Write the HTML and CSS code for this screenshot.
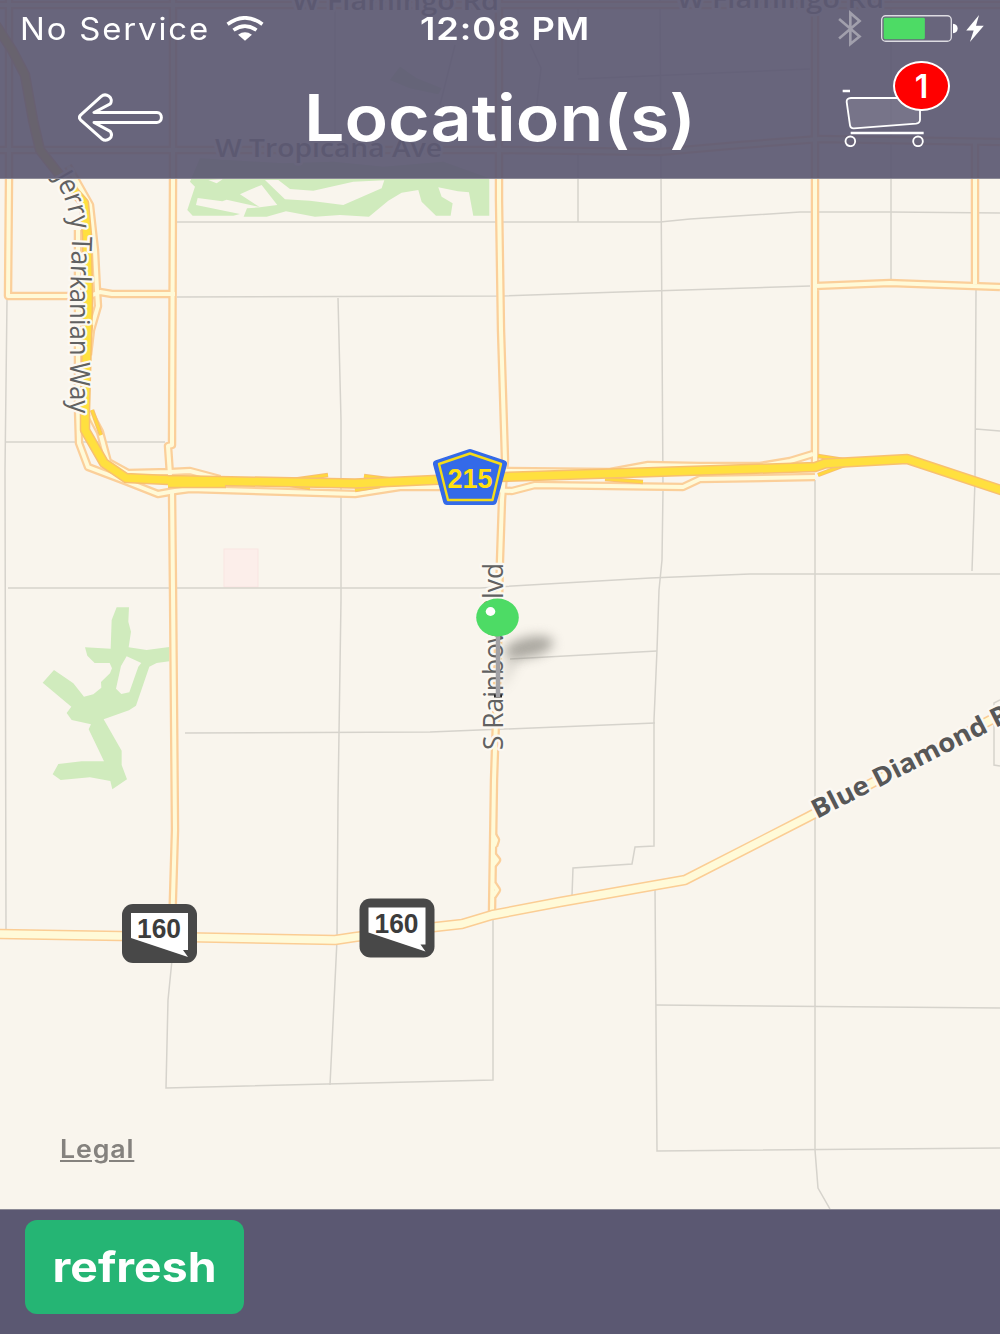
FILE: index.html
```html
<!DOCTYPE html>
<html lang="en">
<head>
  <meta charset="UTF-8">
  <meta name="viewport" content="width=device-width, initial-scale=1.0">
  <title>Location(s)</title>
  <link rel="stylesheet" href="styles.css">
</head>
<body>

  <div class="app">

    <!-- Map runs behind the translucent header -->
    <main class="map-area">
      <svg class="map" viewBox="0 0 1000 1209">
        <defs>
          <g id="roads">
            <path d="M9 0V180L8 296H75M90 296L100 292L112 294H175" />
            <path d="M173 0V180L172 445L168 446L170 475M172 490L173 590L175 830L172 930" />
            <path d="M499 0V200L501 330L505 460L502 500L500 560L497 690L494 780L492 912" />
            <path d="M815 0V470M975 140V284M815 286L890 283L1000 287" />
            <path d="M0 150H500L660 152L740 145L820 139L1000 142M0 5H1000" />
            <path d="M68 166L90 205L95 250L97 290L98 306L91 330L88 355M78 230V410L79 443L88 467L125 481L158 494L175 491L190 489L355 494L400 487L440 487L512 491L535 485L683 487L700 479L815 477" />
            <path d="M91 415L100 432L108 462L128 473L170 472L190 471L220 479M505 471L610 472L648 465L700 466L760 466L790 461L813 454" />
            <path d="M493 835L496 840L494 846M493 855L497 860L493 865M493 884L497 890L493 896" />
          </g>
          <path id="highway" d="M-4 25L12 50L25 75L33 120L40 150L62 178L84 203L87 235L88 300L85 410V430L104 463L126 478L168 480L355 483.500L500 477L815 467L825 463.500L907 459L1004 491" />
          <path id="diamond" d="M-4 934L120 936L335 940L355 937L435 927L462 924L492 915L560 902L685 880L808 817L1000 715" />
          <path id="ramps" d="M92 410L101 435M285 481L328 475M285 484L310 488M364 476L395 480M355 490L380 486M605 479L643 482M818 456L850 461M818 475L850 463M91 325L88 350" />
          <path id="jerry" d="M49 170L60 189Q72 212 72 243L70 290L70 440" />
        </defs>

        <rect class="land" width="1000" height="1209" />
        <rect class="hospital" x="224" y="549" width="34" height="38" />

        <!-- Parks -->
        <g class="park">
          <path transform="translate(30 590) scale(.3333)" d="M260 52H297L295 95L303 125L296 172L350 180L418 171V214L380 219L358 230L318 347L297 361L221 388L275 482V525L291 568L247 598L241 573L180 562L92 570L68 553L85 522L155 514H222L176 418L183 403L125 390L110 369L124 350L38 278L72 240L130 280L162 320L190 313L214 293L213 276L240 250L246 235L239 219H194L172 197L165 172L242 176L245 90ZM290 199L273 228L258 296L274 312L298 307L325 230L334 219Z" />
          <path transform="scale(.3333)" d="M600 475L850 490L1000 485L1150 500L1330 485L1468 535V647H1420L1407 577L1374 574L1315 562L1325 590L1358 610L1352 647H1308L1265 605L1255 570L1205 578L1165 602L1107 650L1020 645L945 650L858 634L800 650H731L741 625L782 622L680 599L667 604L593 594L588 615L720 642L700 647H578L562 630L585 560L570 545ZM668 538L650 550L625 540ZM720 583L750 569L785 555L832 615L780 622ZM795 540L855 598L930 602L1030 615L1145 565L1153 541L1060 545L940 572L870 567L835 540Z" />
          <path transform="scale(.3333)" d="M1200 200L1250 235L1325 265L1315 283L1230 265L1170 240Z" />
        </g>

        <!-- Side streets -->
        <g class="street">
          <path d="M7 300L5 470L6 930M6 442H165M176 222H660L690 219L800 212H890L1000 213M578 152V222" />
          <path d="M660 0L661 178L663 490L662 560L659 590L657 650L654 720V846L635 847L632 864L573 868L572 896M655 888L657 1151L1000 1148" />
          <path d="M891 0V283M177 297L500 296L620 292L810 286M335 0V140M338 298L341 420V600L338 800L337 940L330 1085" />
          <path d="M976 290L975 480L972 571M976 429L1000 431M8 588H480L650 578L750 574H1000M510 659L657 651M185 733L430 732L655 723" />
          <path d="M815 480V1150L818 1188L830 1209M172 960L168 1000L166 1088L493 1080V920M656 1005L1000 1008M1000 700L994 703V765L1000 766" />
          <path d="M578 75V5M578 79L810 69M530 44L541 68L535 120M455 45L440 105" />
        </g>

        <!-- Roads: dark casing first, light fill on top -->
        <use href="#roads" class="road-case" />
        <use href="#roads" class="road-fill" />
        <use href="#ramps" class="ramp-case" />
        <use href="#ramps" class="ramp-fill" />
        <use href="#highway" class="highway-case" />
        <path class="highway-case" d="M168 483H226" />
        <use href="#highway" class="highway-fill" />
        <path class="highway-fill" d="M168 483H225" />
        <use href="#diamond" class="diamond-case" />
        <use href="#diamond" class="diamond-fill" />

        <!-- Labels -->
        <g class="label">
          <text x="215" y="157" textLength="227" lengthAdjust="spacingAndGlyphs">W Tropicana Ave</text>
          <text x="292" y="10" textLength="207" lengthAdjust="spacingAndGlyphs">W Flamingo Rd</text>
          <text x="677" y="8" textLength="207" lengthAdjust="spacingAndGlyphs">W Flamingo Rd</text>
          <text class="tall"><textPath href="#jerry" startOffset="9" textLength="239" lengthAdjust="spacingAndGlyphs">Jerry Tarkanian Way</textPath></text>
          <text class="tall" transform="translate(503 750) rotate(-90)" textLength="187" lengthAdjust="spacingAndGlyphs">S Rainbow Blvd</text>
          <text class="strong" transform="translate(817 819) rotate(-27)" textLength="236" lengthAdjust="spacingAndGlyphs">Blue Diamond Rd</text>
        </g>

        <!-- County 215 shield -->
        <g transform="translate(433 449)">
          <path class="shield-blue" d="M37 4L70 15L60 52H14L4 15Z" />
          <path class="shield-line" d="M37 4.500L68 15L59.500 51H15L6 15Z" />
          <text class="shield-text yellow" x="37" y="39" textLength="45" lengthAdjust="spacingAndGlyphs">215</text>
        </g>

        <!-- Nevada 160 shields -->
        <g transform="translate(122 904)">
          <rect class="shield-dark" width="75" height="59" rx="11" />
          <path class="shield-white" d="M9 9H66V46L61 46L66 53L9 34Z" />
          <text class="shield-text" x="37" y="34" textLength="44" lengthAdjust="spacingAndGlyphs">160</text>
        </g>
        <g transform="translate(359.500 898.500)">
          <rect class="shield-dark" width="75" height="59" rx="11" />
          <path class="shield-white" d="M9 9H66V46L61 46L66 53L9 34Z" />
          <text class="shield-text" x="37" y="34" textLength="44" lengthAdjust="spacingAndGlyphs">160</text>
        </g>

        <!-- Pin -->
        <ellipse class="pin-shadow" cx="529" cy="647" rx="25" ry="10" transform="rotate(-12 529 647)" />
        <path class="pin-shadow faint" d="M500 692L508 655L522 655Z" />
        <path class="pin-tip" d="M494 696H502" />
        <path class="pin-stem" d="M498 634V697" />
        <ellipse class="pin-head" cx="497.500" cy="617.500" rx="21.300" ry="19" />
        <ellipse class="pin-shine" cx="490.500" cy="611.500" rx="4.800" ry="4.400" />
      </svg>
      <a class="legal" href="#">Legal</a>
    </main>

    <header class="top-bar">
      <div class="status-bar">
        <div class="carrier">
          <span class="carrier-name">No Service</span>
          <svg class="wifi" viewBox="0 0 114 76">
            <path class="line" d="M4 25Q57 -14 110 25M22 43Q57 18 92 43" />
            <path class="solid" d="M36 57Q57 42 78 57L57 75Z" />
          </svg>
        </div>
        <span class="time">12:08 PM</span>
        <div class="power">
          <svg class="bluetooth" viewBox="0 0 72 112">
            <path d="M3 27L65 80L37 103V9L65 33L3 86" />
          </svg>
          <svg class="battery" viewBox="0 0 230 80">
            <rect class="battery-case" x="2" y="2" width="208" height="76" rx="12" />
            <rect class="battery-level" x="8" y="8" width="123" height="64" rx="4" />
            <path class="solid" d="M215 26Q229 28 229 40T215 54Z" />
          </svg>
          <svg class="bolt" viewBox="0 0 52 80">
            <path class="solid" d="M38 0L0 46H22L11 80L52 32H29Z" />
          </svg>
        </div>
      </div>

      <nav class="nav-bar">
        <a class="back" href="#" aria-label="Back">
          <svg viewBox="0 0 256 148">
            <path d="M8 66L69 11C84 -2 109 14 97 33L48 59H238C256 59 256 89 238 89H48L97 116C109 134 87 150 71 138L8 82Q0 74 8 66Z" />
          </svg>
        </a>
        <h1>Location(s)</h1>
        <a class="cart" href="#" aria-label="Cart">
          <svg viewBox="0 0 246 174">
            <path class="thick" d="M2 6H24M26 132H245" />
            <path class="basket" d="M27 27H222Q234 27 234 39V92Q234 102 222 104L36 118Q26 119 24 109L14 39Q13 28 27 27Z" />
            <circle cx="25" cy="157" r="14.500" />
            <circle cx="228" cy="157" r="14.500" />
          </svg>
          <span class="badge">1</span>
        </a>
      </nav>
    </header>

    <footer class="bottom-bar">
      <button class="refresh"><span>refresh</span></button>
    </footer>

  </div>

</body>
</html>
```
FILE: styles.css
```css
body {
  margin: 0;
  font-family: Inter, "Liberation Sans", sans-serif;
  background: #5b5872;
  color: #fff;
}

.app {
  display: grid;
  grid-template-rows: 179px 1030px 125px;
  height: 1334px;
  width: 1000px;
  overflow: hidden;
}

/* Map */
.map-area {
  grid-area: 1 / 1 / 3 / 2;
  position: relative;
}

.map {
  display: block;
  width: 1000px;
  height: 1209px;
}

.land {
  fill: #f9f5ed;
}

.hospital {
  fill: #fceeea;
  stroke: #fae5e2;
}

.park {
  fill: #d0ebbd;
  fill-rule: evenodd;
}

.street {
  fill: none;
  stroke: #d6d3cc;
  stroke-width: 1.5;
}

.road-case,
.road-fill,
.ramp-case,
.ramp-fill,
.highway-case,
.highway-fill,
.diamond-case,
.diamond-fill {
  fill: none;
  stroke-linejoin: round;
}

.road-case {
  stroke: #fbcf9a;
  stroke-width: 8.5;
}

.road-fill {
  stroke: #fffad8;
  stroke-width: 4;
}

.ramp-case {
  stroke: #f8bf70;
  stroke-width: 4.5;
}

.ramp-fill {
  stroke: #ffd83e;
  stroke-width: 2.5;
}

.highway-case {
  stroke: #f8c070;
  stroke-width: 10.5;
}

.highway-fill {
  stroke: #ffe03f;
  stroke-width: 7.5;
}

.diamond-case {
  stroke: #fbcd94;
  stroke-width: 10.5;
}

.diamond-fill {
  stroke: #fffad8;
  stroke-width: 7.5;
}

.label {
  font-family: "Open Sans", "Noto Sans", sans-serif;
  font-size: 26px;
  font-weight: 600;
  fill: #6a6a6a;
  stroke: #fbf8f2;
  stroke-width: 5;
  stroke-linejoin: round;
  paint-order: stroke;
}

.label .tall {
  font-size: 28px;
  font-weight: 500;
  fill: #616161;
}

.label .strong {
  font-size: 26px;
  font-weight: 700;
  fill: #575757;
}

.shield-blue {
  fill: #346ae8;
  stroke: #346ae8;
  stroke-width: 8;
  stroke-linejoin: round;
}

.shield-line {
  fill: none;
  stroke: #f5dc18;
  stroke-width: 2.4;
  stroke-linejoin: round;
}

.shield-dark {
  fill: #484848;
}

.shield-white {
  fill: #fff;
}

.shield-text {
  font-family: "Liberation Sans", sans-serif;
  font-size: 28px;
  font-weight: 700;
  text-anchor: middle;
  fill: #3c3c3c;
}

.shield-text.yellow {
  fill: #ffe010;
}

.pin-shadow {
  fill: #77756e;
  opacity: 0.6;
  filter: blur(6px);
}

.pin-shadow.faint {
  opacity: 0.25;
}

.pin-stem {
  stroke: #a2a2a6;
  stroke-width: 4.5;
}

.pin-tip {
  stroke: #222;
  stroke-width: 3;
}

.pin-head {
  fill: #4ddb65;
}

.pin-shine {
  fill: #fff;
}

.legal {
  position: absolute;
  left: 60px;
  bottom: 45px;
  font-size: 25px;
  line-height: 30px;
  font-weight: 600;
  letter-spacing: 0.8px;
  color: #85827e;
  text-decoration-thickness: 2px;
  text-underline-offset: 2px;
  transform: scaleX(1.07);
  transform-origin: left;
}

/* Header */
.top-bar {
  grid-area: 1 / 1 / 2 / 2;
  position: relative;
  background: rgba(91, 88, 114, 0.92);
  box-sizing: border-box;
  border-bottom: 1px solid #8c8a96;
}

.status-bar {
  display: grid;
  grid-template-columns: 1fr auto 1fr;
  align-items: center;
  height: 57px;
  padding: 0 16px 0 20px;
}

.carrier {
  display: flex;
  align-items: center;
  gap: 25px;
}

.carrier-name {
  font-size: 30.5px;
  letter-spacing: 1.7px;
  transform: scaleX(1.08);
  transform-origin: left;
}

.time {
  font-size: 31px;
  font-weight: 600;
  letter-spacing: 0.8px;
  padding-left: 5px;
  transform: scaleX(1.17);
}

.wifi {
  width: 38px;
  height: 25px;
  margin-left: 5px;
}

.wifi .line {
  fill: none;
  stroke: #fff;
  stroke-width: 11;
}

.solid {
  fill: #fff;
}

.power {
  display: flex;
  align-items: center;
  justify-content: flex-end;
}

.bluetooth {
  width: 24px;
  height: 37px;
  margin-right: 19px;
  fill: none;
  stroke: #a19fac;
  stroke-width: 8;
}

.battery {
  width: 77px;
  height: 27px;
  margin-right: 8px;
}

.battery-case {
  fill: none;
  stroke: #dddce2;
  stroke-width: 4;
}

.battery-level {
  fill: #4ddb65;
}

.bolt {
  width: 18px;
  height: 27px;
}

.nav-bar {
  display: grid;
  grid-template-columns: 84px 1fr 84px;
  align-items: center;
  height: 121px;
  padding: 0 74px 0 78px;
}

.back svg {
  display: block;
  width: 85px;
  height: 49px;
  fill: none;
  stroke: #fff;
  stroke-width: 9;
  stroke-linejoin: round;
}

h1 {
  margin: 0;
  text-align: center;
  font-size: 64px;
  line-height: 78px;
  font-weight: 600;
  transform: translateX(-2px) scaleX(1.12);
}

.cart {
  position: relative;
}

.cart svg {
  display: block;
  width: 82px;
  height: 58px;
  fill: none;
  stroke: #fff;
  stroke-width: 5.5;
}

.cart .thick {
  stroke-width: 8;
}

.cart .basket {
  fill: rgba(255, 255, 255, 0.1);
}

.badge {
  position: absolute;
  top: -28px;
  left: 51px;
  box-sizing: border-box;
  width: 57px;
  height: 50px;
  border: 2px solid #fff;
  border-radius: 28px / 25px;
  background: #f00;
  color: #fff;
  font-size: 32px;
  line-height: 48px;
  font-weight: 600;
  text-align: center;
}

/* Footer */
.bottom-bar {
  grid-area: 3 / 1 / 4 / 2;
  box-sizing: border-box;
  padding: 10px 25px;
  background: #5b5872;
  border-top: 1px solid #8c8a96;
}

.refresh {
  display: block;
  width: 219px;
  height: 94px;
  border: none;
  border-radius: 12px;
  background: #25b574;
  color: #fff;
  font-family: inherit;
  font-size: 41px;
  font-weight: 700;
  cursor: pointer;
}

.refresh span {
  display: inline-block;
  transform: scaleX(1.13);
}
```
